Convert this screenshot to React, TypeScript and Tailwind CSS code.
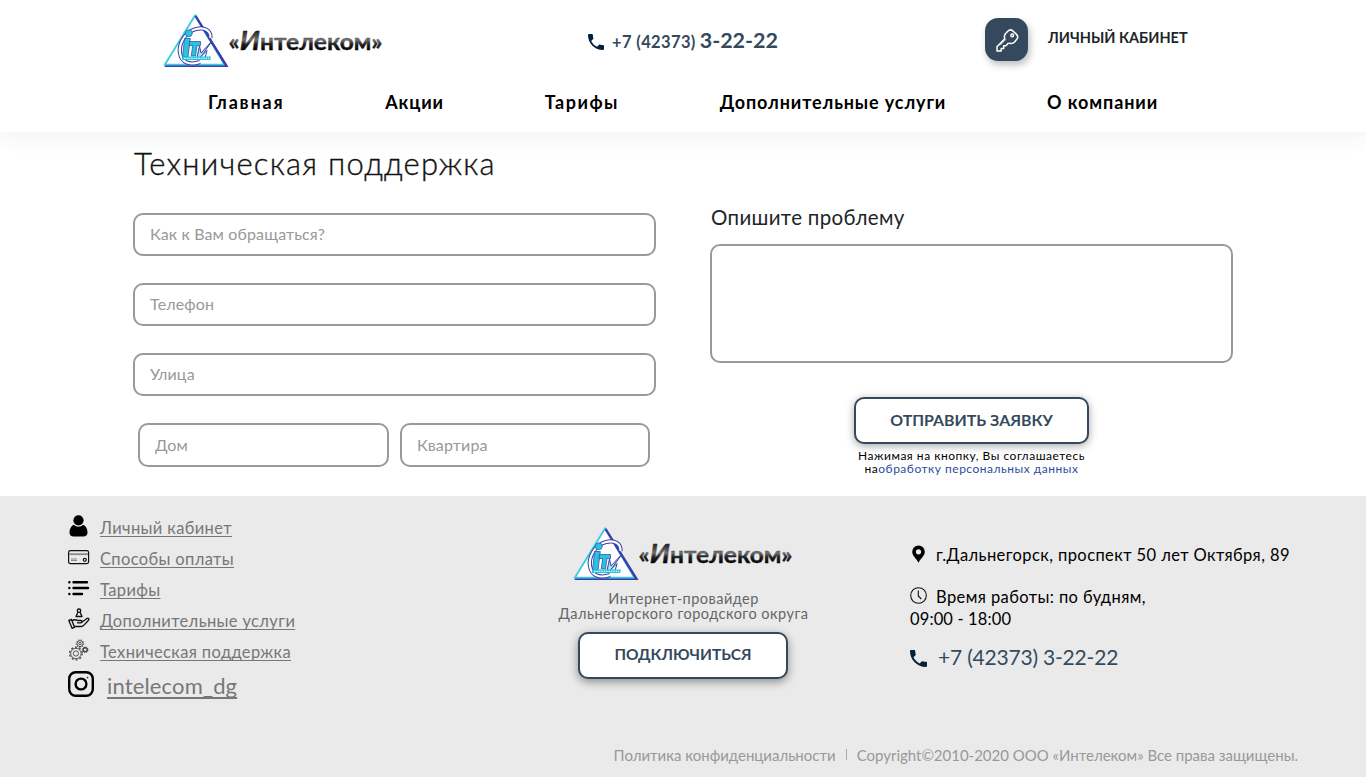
import type { ReactNode } from "react";

function Logo({ id }: { id: string }) {
  return (
    <svg width="222" height="56" viewBox="0 0 222 56" className="block shrink-0">
      <defs>
        <linearGradient id={id} gradientUnits="userSpaceOnUse" x1="0" y1="18" x2="0" y2="38">
          <stop offset="0" stopColor="#222" />
          <stop offset="0.450" stopColor="#707070" />
          <stop offset="0.650" stopColor="#222" />
          <stop offset="1" stopColor="#000" />
        </linearGradient>
      </defs>
      <path d="M33 3.500 63.800 53H3z" fill="#fff" stroke="#3a3fa6" strokeWidth="1.900" />
      <path d="M32 2.500 61.500 51.700H1.800z" fill="#fff" stroke="#3ccbe6" strokeWidth="1.800" />
      <path d="M32.500 3 63.500 53.200" fill="none" stroke="#3a3fa6" strokeWidth="2.200" />
      <path d="M47.500 25C48 17 41 14 33 16C22 19 15.500 31 17 40C18.500 50 27 52.500 37 49" fill="none" stroke="#3a3fa6" strokeWidth="4.200" />
      <path d="M47.500 25C48 17 41 14 33 16C22 19 15.500 31 17 40C18.500 50 27 52.500 37 49" fill="none" stroke="#fff" strokeWidth="2.200" />
      <path d="M21.500 25.500h5.800L25 44h-5.500z" fill="#27c4de" stroke="#3a3fa6" strokeWidth="0.700" />
      <circle cx="25.800" cy="20.300" r="3.500" fill="#27c4de" stroke="#3a3fa6" strokeWidth="0.600" />
      <path d="M26.500 28.500h11v4h-3.500L32.500 43h-4.300l1.500-10.500H26z" fill="#27c4de" stroke="#3a3fa6" strokeWidth="0.700" />
      <path d="M36.500 33l1.500 7 11-12-11.500 16.500h-3.500z" fill="#9be6f2" stroke="#3a3fa6" strokeWidth="1" />
      <path d="m36.500 45 7.500-7.500-2 7.500z" fill="#fff" stroke="#3a3fa6" />
      <path d="M19 43.500h29l-1 3.500H19z" fill="#27c4de" />
      <path d="M21 45.300h25" stroke="#fff" strokeWidth="1.100" strokeDasharray="1.600 0.800" />
      <g fontFamily="Lato, sans-serif" fontWeight="700" fill={"url(#" + id + ")"} stroke={"url(#" + id + ")"} strokeWidth="0.400">
        <text x="65.500" y="37" fontSize="22.500" textLength="154" lengthAdjust="spacingAndGlyphs">
          «<tspan fontSize="26" fontStyle="italic">И</tspan>нтелеком»
        </text>
      </g>
    </svg>
  );
}

function Phone({ className }: { className: string }) {
  return (
    <svg viewBox="3 3 18 18" className={className} fill="#04213b">
      <path d="M6.620 10.790c1.440 2.830 3.760 5.140 6.590 6.590l2.200-2.200c.270-.270.670-.360 1.020-.240 1.120.370 2.330.570 3.570.570.550 0 1 .450 1 1V20c0 .550-.450 1-1 1-9.390 0-17-7.610-17-17 0-.550.450-1 1-1h3.500c.550 0 1 .450 1 1 0 1.250.200 2.450.570 3.570.110.350.030.740-.250 1.020z" />
    </svg>
  );
}

function KeyIcon() {
  return (
    <svg width="24" height="24" viewBox="0 0 24 24" fill="none" stroke="#fff" strokeWidth="1.500" strokeLinejoin="round" strokeLinecap="round">
      <path d="M14.500 15.200c1.400.400 3.600.200 4.800-1l2.300-2.600c1.400-1.600 1.200-4-.300-5.500l-3.300-3c-1.500-1.400-3.800-1.300-5.200.100L10.600 5.500c-1.400 1.600-1.400 3.600-.800 5.200L2 18.800v4.200h4.200v-2.600h2.500v-2.600h2.200l2.300-2.600" />
      <circle cx="17.200" cy="7.400" r="1.300" />
      <path d="M10.500 11.700l-5 5.200" strokeWidth="0.800" />
    </svg>
  );
}

function UserIcon() {
  return (
    <svg width="22" height="22" viewBox="0 0 22 22" className="-mt-px">
      <circle cx="10.500" cy="5.300" r="5.100" />
      <path d="M5.800 9.800a6.500 6.500 0 0 0 9.400 0c3 1.500 4.300 4.300 4.300 7.700 0 2.700-1.700 4-4 4h-10c-2.300 0-4-1.300-4-4 0-3.400 1.300-6.200 4.300-7.700z" />
    </svg>
  );
}

function CardIcon() {
  return (
    <svg width="22" height="22" viewBox="0 0 22 22" fill="none" stroke="#111" className="-mt-px">
      <rect x="0.600" y="4.600" width="20" height="13" rx="1.800" strokeWidth="1.200" />
      <path d="M1.200 8.200h18.800" stroke="#888" strokeWidth="1.800" />
      <path d="M3 13h6M3 14.500h6" stroke="#888" strokeWidth="1" />
      <circle cx="16.800" cy="13.800" r="1.500" strokeWidth="1.200" />
    </svg>
  );
}

function ListIcon() {
  return (
    <svg width="22" height="22" viewBox="0 0 22 22" stroke="#000" strokeWidth="2.400" strokeLinecap="round" className="-mt-px">
      <path d="M1.300 5.200h.100M5.500 5.200h13.500M1.300 11h.100M5.500 11h14.500M1.300 17h.100M5.500 17h8.500" />
    </svg>
  );
}

function HandIcon() {
  return (
    <svg width="22" height="22" viewBox="0 0 22 22" fill="none" stroke="#111" strokeWidth="1.350" strokeLinejoin="round" strokeLinecap="round" className="-mt-[2px]">
      <circle cx="11" cy="2.700" r="1.700" />
      <path d="M9.800 4.500 8 8.500h6l-1.800-4" />
      <path d="M.8 12.500l2.700-1 3 7.700-2.300 1.200zM4 12.800c2-1.300 4-1.300 5.500-.3h3.300c1.700 0 1.700 2.300 0 2.300H9.500M14 14l5-3.500c1.200-.8 2.500.4 1.500 1.700l-5 5.400c-.6.600-1.200.900-2 .900H6.300" />
    </svg>
  );
}

function GearsIcon() {
  return (
    <svg width="22" height="22" viewBox="0 0 22 22" fill="none" stroke="#444" strokeWidth="0.900" className="-mt-[2px]">
      <circle cx="7.900" cy="14.500" r="5.200" />
      <circle cx="7.900" cy="14.500" r="6.300" strokeDasharray="2 2" strokeWidth="1.300" />
      <circle cx="7.900" cy="14.500" r="2.600" />
      <circle cx="12" cy="4.600" r="3" />
      <circle cx="12" cy="4.600" r="3.800" strokeDasharray="1.200 1.400" />
      <circle cx="12" cy="4.600" r="1.200" />
      <circle cx="17.200" cy="10.800" r="2" strokeWidth="1.500" />
      <circle cx="17.200" cy="10.800" r="2.900" strokeDasharray="1 1.300" />
    </svg>
  );
}

function InstagramIcon() {
  return (
    <svg width="26" height="26" viewBox="0 0 26 26" fill="none" stroke="#000" className="-mt-[3px]">
      <rect x="1.200" y="1.200" width="23.600" height="23.600" rx="6.500" strokeWidth="2.400" />
      <circle cx="13" cy="13" r="5.400" strokeWidth="2.400" />
      <circle cx="19.500" cy="6.600" r="0.900" fill="#333" stroke="none" />
    </svg>
  );
}

function FooterLink({ icon, children }: { icon: ReactNode; children: ReactNode }) {
  return (
    <li className="flex h-[31px] items-center gap-[10px]">
      {icon}
      <a href="#" className="mt-[3px] text-[16.500px] leading-[20px] tracking-[0.360px] underline decoration-1 underline-offset-[2px] [text-decoration-skip-ink:none]">{children}</a>
    </li>
  );
}

const field =
  "block rounded-[10px] border-2 border-[#999] bg-white pb-[2px] pl-[15px] pr-3 text-[16px] tracking-[0.140px] text-black outline-none placeholder:text-[#999]";
const button =
  "rounded-[10px] border-2 border-[#34495e] bg-white pb-[1px] font-bold text-[#34495e]";

export default function App() {
  return (
    <div className="flex h-[777px] w-[1366px] flex-col overflow-hidden bg-white font-['Lato',sans-serif] text-black">
      <header className="h-[132px] shrink-0 shadow-[0_5px_20px_rgba(52,73,94,0.07)]">
        <div className="flex h-[82px] pl-[163px]">
          <div className="w-[425px] pt-[13px]"><Logo id="ink-header" /></div>
          <div className="flex w-[397px] pt-[27px] font-bold text-[#34495e]">
            <Phone className="mt-[7px] mr-[8px] size-[16px]" />
            <p className="whitespace-nowrap leading-[26px]">
              <span className="text-[16.500px] tracking-[0.370px]">+7 (42373)</span>{" "}
              <span className="text-[21.500px]">3-22-22</span>
            </p>
          </div>
          <a href="#" className="flex gap-[20px] pt-[18px]">
            <span className="flex size-[43px] items-center justify-center rounded-[13px] bg-[#34495e] shadow-[2px_4px_7px_rgba(0,0,0,0.25)]">
              <KeyIcon />
            </span>
            <span className="pt-[10px] text-[14.500px] leading-[20px] font-bold text-[#212529]">ЛИЧНЫЙ КАБИНЕТ</span>
          </a>
        </div>
        <nav className="flex justify-between pr-[208px] pl-[208px] pt-[8px] text-[18px] leading-[24px] font-bold tracking-[0.870px]">
          <a href="#" className="tracking-[1.800px]">Главная</a>
          <a href="#">Акции</a>
          <a href="#" className="tracking-[1.500px]">Тарифы</a>
          <a href="#">Дополнительные услуги</a>
          <a href="#">О компании</a>
        </nav>
      </header>

      <main className="h-[364px] shrink-0 pl-[133px]">
        <h1 className="pt-[12px] pb-px pl-px text-[31px] leading-[38px] font-light tracking-[1.250px] text-[#111] [-webkit-text-stroke:0.350px_#111]">Техническая поддержка</h1>
        <form className="flex gap-[54px]">
          <div className="flex w-[523px] flex-col gap-[27px] pt-[30px]">
            <input className={field + " h-[43px]"} placeholder="Как к Вам обращаться?" />
            <input className={field + " h-[43px]"} placeholder="Телефон" />
            <input className={field + " h-[43px]"} placeholder="Улица" />
            <div className="flex gap-[11px] pl-[5px]">
              <input className={field + " h-[44px] w-[251px]"} placeholder="Дом" />
              <input className={field + " h-[44px] w-[250px]"} placeholder="Квартира" />
            </div>
          </div>
          <div className="flex w-[523px] flex-col items-center pt-[20px]">
            <label htmlFor="problem" className="w-full pl-px text-[20.500px] leading-[28px] tracking-[0.330px] text-[#212529]">Опишите проблему</label>
            <textarea id="problem" className={field + " mt-[13px] h-[119px] w-full shrink-0 resize-none"} />
            <button type="button" className={button + " mt-[34px] h-[47px] w-[235px] text-[15.900px] shadow-[0_2px_8px_rgba(0,0,0,0.350)]"}>ОТПРАВИТЬ ЗАЯВКУ</button>
            <p className="mt-[5px] text-center text-[12px] leading-[13px] tracking-[0.510px]">
              Нажимая на кнопку, Вы соглашаетесь<br />
              на<a href="#" className="text-[#2b4d9c]">обработку персональных данных</a>
            </p>
          </div>
        </form>
      </main>

      <footer className="flex h-[281px] shrink-0 flex-col bg-[#eaeaea]">
        <div className="flex h-[247px]">
          <ul className="w-[491px] pt-[15px] pl-[68px] text-[#777]">
            <FooterLink icon={<UserIcon />}>Личный кабинет</FooterLink>
            <FooterLink icon={<CardIcon />}>Способы оплаты</FooterLink>
            <FooterLink icon={<ListIcon />}>Тарифы</FooterLink>
            <FooterLink icon={<HandIcon />}>Дополнительные услуги</FooterLink>
            <FooterLink icon={<GearsIcon />}>Техническая поддержка</FooterLink>
            <li className="flex h-[38px] items-center gap-[13px] pt-[1px]">
              <InstagramIcon />
              <a href="#" className="text-[22px] leading-[26px] tracking-[0.150px] underline decoration-2 underline-offset-[3px] [text-decoration-skip-ink:none]">intelecom_dg</a>
            </li>
          </ul>
          <div className="flex w-[385px] flex-col items-center pt-[30px]">
            <Logo id="ink-footer" />
            <p className="mt-[9px] text-center text-[14.500px] leading-[15px] tracking-[0.480px] text-[#666]">
              Интернет-провайдер<br />Дальнегорского городского округа
            </p>
            <button type="button" className={button + " mt-[11px] mr-px h-[47px] w-[210px] text-[15.500px] shadow-[0_3px_10px_rgba(0,0,0,0.400)]"}>ПОДКЛЮЧИТЬСЯ</button>
          </div>
          <address className="pt-[48px] pl-[34px] text-[16.500px] leading-[22px] tracking-[0.410px] not-italic">
            <p className="flex">
              <svg width="17" height="20" viewBox="0 0 17 20" className="mr-[9px]">
                <path d="M8.500 1.500a6.300 6.300 0 0 0-6.300 6.300c0 3.900 3.700 6.300 6.300 11 2.600-4.700 6.300-7.100 6.300-11a6.300 6.300 0 0 0-6.300-6.300zm0 3.700a2.600 2.600 0 1 1 0 5.200 2.600 2.600 0 0 1 0-5.200z" />
              </svg>
              г.Дальнегорск, проспект 50 лет Октября, 89
            </p>
            <p className="mt-[20px] flex">
              <svg width="17" height="20" viewBox="0 0 17 20" fill="none" stroke="#111" className="mr-[9px]">
                <circle cx="8.500" cy="9.500" r="7.800" strokeWidth="1.100" />
                <path d="M8.300 4.500v5.500l3 3" strokeWidth="1.100" />
              </svg>
              Время работы: по будням,
            </p>
            <p className="tracking-[0.130px]">09:00 - 18:00</p>
            <p className="mt-[13px] flex text-[21px] leading-[28px] tracking-[-0.200px] text-[#34495e]">
              <Phone className="mt-[7px] mr-[11px] size-[17px]" />
              +7 (42373) 3-22-22
            </p>
          </address>
        </div>
        <p className="flex justify-end pr-[68px] text-[15px] leading-[25px] tracking-[-0.010px] text-[#999]">
          <a href="#">Политика конфиденциальности</a>
          <span className="mx-[10px] mt-[6px] h-[11px] w-px bg-[#aaa]" />
          <span>Copyright©2010-2020 ООО «Интелеком» Все права защищены.</span>
        </p>
      </footer>
    </div>
  );
}
